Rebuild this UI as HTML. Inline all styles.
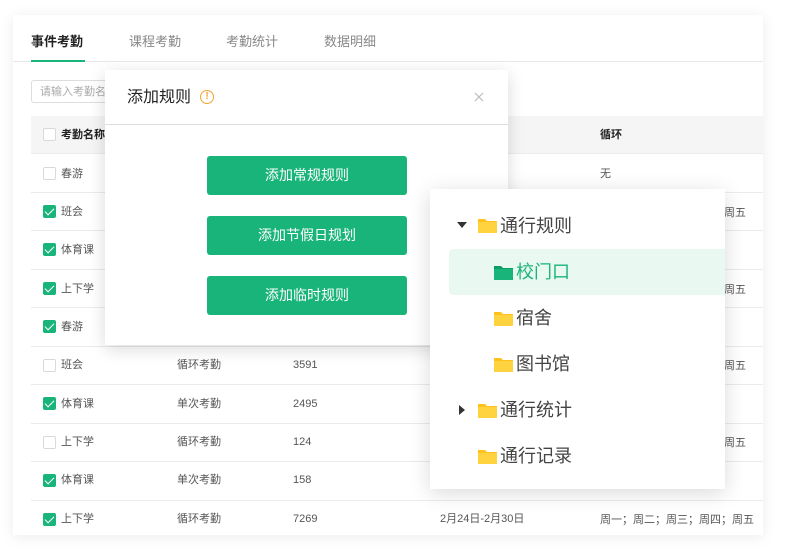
<!DOCTYPE html>
<html><head><meta charset="utf-8"><style>
*{margin:0;padding:0;box-sizing:border-box}
body{width:785px;height:555px;background:#fff;position:relative;overflow:hidden;font-family:"Liberation Sans","Noto Sans CJK SC",sans-serif;color:#333}
.card{position:absolute;left:13px;top:15px;width:750px;height:520px;background:#fff;box-shadow:0 2px 14px rgba(0,0,0,.08)}
.tab{position:absolute;top:34px;font-size:13px;line-height:16px;color:#888}
.abs{position:absolute}
.cb{position:absolute;left:43px;width:13px;height:13px;border:1px solid #d9d9d9;border-radius:2px;background:#fff}
.cb.on{background:#19b47a;border-color:#19b47a}
.cb.on:after{content:"";position:absolute;left:3px;top:0px;width:4px;height:8px;border:solid #fff;border-width:0 1.5px 1.5px 0;transform:rotate(45deg)}
.cell{position:absolute;font-size:11px;line-height:14px;color:#555;white-space:nowrap}
.row{position:absolute;left:31px;width:732px;border-top:1px solid #ebebeb}
.btn{position:absolute;left:207px;width:200px;height:39px;background:#19b47a;border-radius:3px;color:#fff;font-size:14px;text-align:center;line-height:39px}
.fold{position:absolute;width:19px;height:15px}
.ti{position:absolute;font-size:18px;color:#444;line-height:20px}
</style></head><body>
<div class="card"></div>
<div class="tab" style="left:31px;color:#222;font-weight:bold">事件考勤</div>
<div class="tab" style="left:129px">课程考勤</div>
<div class="tab" style="left:226px">考勤统计</div>
<div class="tab" style="left:324px">数据明细</div>
<div class="abs" style="left:13px;top:61px;width:750px;height:1px;background:#e8e8e8"></div>
<div class="abs" style="left:31px;top:60px;width:54px;height:2px;background:#19b47a"></div>
<div class="abs" style="left:31px;top:80px;width:90px;height:23px;border:1px solid #ddd;border-radius:3px;font-size:11px;line-height:14px;color:#aaa;padding:4px 8px;white-space:nowrap;overflow:hidden">请输入考勤名称</div>
<div class="abs" style="left:31px;top:116px;width:732px;height:37px;background:#f5f5f5"></div>
<div class="cb" style="top:128px"></div>
<div class="cell" style="left:61px;top:128px;color:#222;font-weight:bold">考勤名称</div>
<div class="cell" style="left:600px;top:128px;color:#222;font-weight:bold">循环</div>

<div class="row" style="top:153px"></div><div class="cb" style="top:167px"></div><div class="cell" style="left:61px;top:167px">春游</div><div class="cell" style="left:600px;top:167px">无</div>
<div class="row" style="top:192px"></div><div class="cb on" style="top:205px"></div><div class="cell" style="left:61px;top:205px">班会</div><div class="cell" style="left:724px;top:206px">周五</div>
<div class="row" style="top:230px"></div><div class="cb on" style="top:243px"></div><div class="cell" style="left:61px;top:243px">体育课</div>
<div class="row" style="top:269px"></div><div class="cb on" style="top:282px"></div><div class="cell" style="left:61px;top:282px">上下学</div><div class="cell" style="left:724px;top:283px">周五</div>
<div class="row" style="top:307px"></div><div class="cb on" style="top:320px"></div><div class="cell" style="left:61px;top:320px">春游</div>
<div class="row" style="top:346px"></div><div class="cb" style="top:359px"></div><div class="cell" style="left:61px;top:358px">班会</div><div class="cell" style="left:177px;top:358px">循环考勤</div><div class="cell" style="left:293px;top:358px">3591</div><div class="cell" style="left:724px;top:359px">周五</div>
<div class="row" style="top:384px"></div><div class="cb on" style="top:397px"></div><div class="cell" style="left:61px;top:397px">体育课</div><div class="cell" style="left:177px;top:397px">单次考勤</div><div class="cell" style="left:293px;top:397px">2495</div>
<div class="row" style="top:423px"></div><div class="cb" style="top:436px"></div><div class="cell" style="left:61px;top:435px">上下学</div><div class="cell" style="left:177px;top:435px">循环考勤</div><div class="cell" style="left:293px;top:435px">124</div><div class="cell" style="left:724px;top:436px">周五</div>
<div class="row" style="top:461px"></div><div class="cb on" style="top:474px"></div><div class="cell" style="left:61px;top:473px">体育课</div><div class="cell" style="left:177px;top:473px">单次考勤</div><div class="cell" style="left:293px;top:473px">158</div>
<div class="row" style="top:500px"></div><div class="cb on" style="top:513px"></div><div class="cell" style="left:61px;top:512px">上下学</div><div class="cell" style="left:177px;top:512px">循环考勤</div><div class="cell" style="left:293px;top:512px">7269</div><div class="cell" style="left:440px;top:512px">2月24日-2月30日</div><div class="cell" style="left:600px;top:513px">周一；周二；周三；周四；周五</div>

<div class="abs" style="left:105px;top:70px;width:403px;height:275px;background:#fff;box-shadow:0 4px 16px rgba(0,0,0,.15)"></div>
<div class="abs" style="left:127px;top:88px;font-size:16px;line-height:20px;color:#222">添加规则</div>
<div class="abs" style="left:200px;top:90px;width:14px;height:14px;border:1.5px solid #f0a532;border-radius:50%;color:#f0a532;font-size:10px;text-align:center;line-height:11px;font-weight:bold">!</div>
<svg class="abs" style="left:474px;top:92px" width="10" height="10" viewBox="0 0 10 10"><path d="M1 1L9 9M9 1L1 9" stroke="#bbb" stroke-width="1.2"/></svg>
<div class="abs" style="left:105px;top:124px;width:403px;height:1px;background:#ddd"></div>
<div class="btn" style="top:156px">添加常规规则</div>
<div class="btn" style="top:216px">添加节假日规划</div>
<div class="btn" style="top:276px">添加临时规则</div>

<div class="abs" style="left:430px;top:189px;width:295px;height:300px;background:#fff;box-shadow:0 4px 20px rgba(0,0,0,.15)"></div>
<div class="abs" style="left:449px;top:249px;width:276px;height:46px;background:#eaf8f2;border-radius:4px 0 0 4px"></div>
<div class="abs" style="left:457px;top:222px;width:0;height:0;border-left:5px solid transparent;border-right:5px solid transparent;border-top:6px solid #333"></div>
<div class="abs" style="left:459px;top:405px;width:0;height:0;border-top:5px solid transparent;border-bottom:5px solid transparent;border-left:6px solid #333"></div>
<svg class="fold" style="left:478px;top:218px" viewBox="0 0 19 15"><path d="M0 1h7l2 2h10v12H0z" fill="#ffc21c"/><rect y="4" width="19" height="11" fill="#ffd23f"/></svg><div class="ti" style="left:500px;top:216px">通行规则</div>
<svg class="fold" style="left:494px;top:265px" viewBox="0 0 19 15"><path d="M0 1h7l2 2h10v12H0z" fill="#0a9e66"/><rect y="4" width="19" height="11" fill="#19b47a"/></svg><div class="ti" style="left:516px;top:262px;color:#19b47a">校门口</div>
<svg class="fold" style="left:494px;top:311px" viewBox="0 0 19 15"><path d="M0 1h7l2 2h10v12H0z" fill="#ffc21c"/><rect y="4" width="19" height="11" fill="#ffd23f"/></svg><div class="ti" style="left:516px;top:308px">宿舍</div>
<svg class="fold" style="left:494px;top:357px" viewBox="0 0 19 15"><path d="M0 1h7l2 2h10v12H0z" fill="#ffc21c"/><rect y="4" width="19" height="11" fill="#ffd23f"/></svg><div class="ti" style="left:516px;top:354px">图书馆</div>
<svg class="fold" style="left:478px;top:403px" viewBox="0 0 19 15"><path d="M0 1h7l2 2h10v12H0z" fill="#ffc21c"/><rect y="4" width="19" height="11" fill="#ffd23f"/></svg><div class="ti" style="left:500px;top:400px">通行统计</div>
<svg class="fold" style="left:478px;top:449px" viewBox="0 0 19 15"><path d="M0 1h7l2 2h10v12H0z" fill="#ffc21c"/><rect y="4" width="19" height="11" fill="#ffd23f"/></svg><div class="ti" style="left:500px;top:446px">通行记录</div>
</body></html>
